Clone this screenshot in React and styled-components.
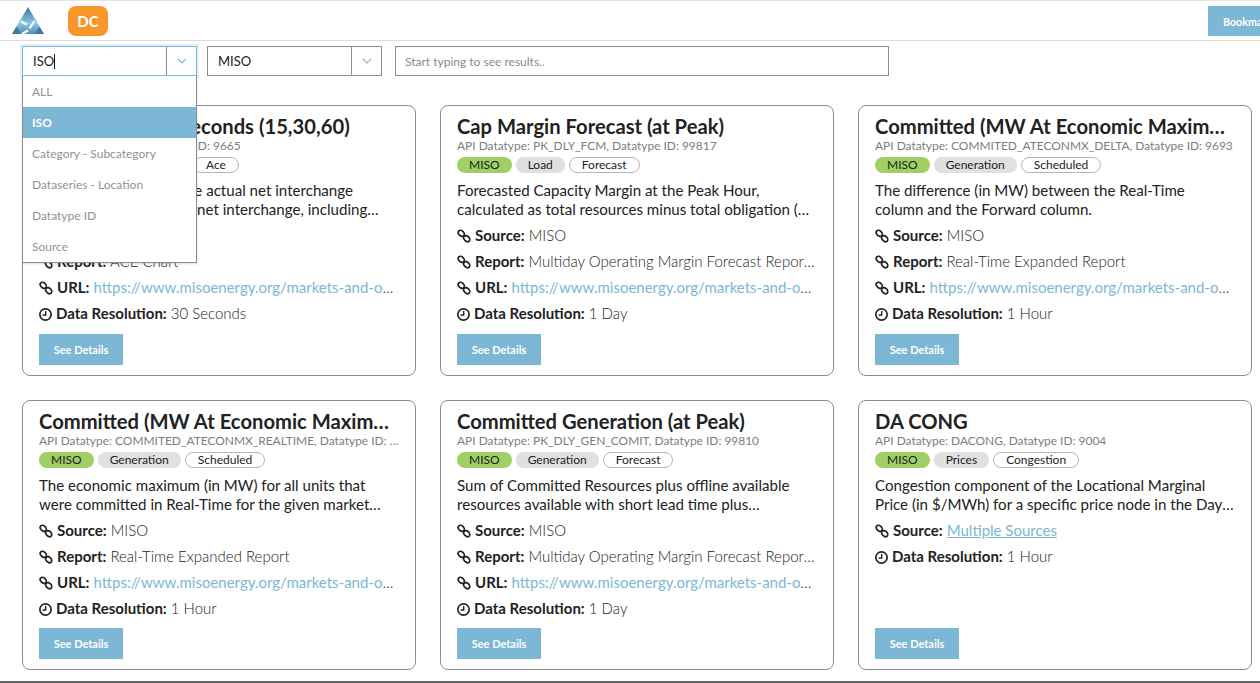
import React from "react";
import styled, { createGlobalStyle } from "styled-components";

const Global = createGlobalStyle`
  html, body { margin: 0; padding: 0; background: #fff; }
  body { font-family: Lato, "Open Sans", sans-serif; color: #222; overflow: hidden; }
  * { box-sizing: border-box; }
`;
const Page = styled.div`
  width: 1260px; height: 683px; position: relative; overflow: hidden;
  border-top: 1px solid #e4e4e4; border-bottom: 2px solid #666;
`;
const Header = styled.header`
  height: 40px; display: flex; align-items: center; padding-left: 12px;
  border-bottom: 1px solid #dcdcdc; position: relative;
`;
const Logo = styled.svg` width: 33px; height: 28px; display: block; `;
const Avatar = styled.div`
  width: 40px; height: 30px; margin-left: 23px; border-radius: 8px; background: #f7962a; color: #fff;
  font-size: 15px; font-weight: 700; display: flex; align-items: center; justify-content: center;
`;
const Bookmark = styled.button`
  margin-left: auto; width: 52px; height: 30px; border: 0; background: #7cb7d6; color: #fff; font: 700 10.7px Lato, sans-serif;
  padding: 0 0 0 15px; text-align: left; white-space: nowrap; overflow: hidden; margin-top: 1px;
`;
const Filters = styled.div`
  display: flex; gap: 10px; padding: 5px 0 0 22px; height: 64px;
`;
const SelectWrap = styled.div`
  position: relative; width: ${p => p.$w}px; height: 30px; display: flex; background: #fff;
  border: 1px solid ${p => p.$focus ? "#7cb7d6" : "#8e8e8e"};
  box-shadow: ${p => p.$focus ? "0 0 0 2px #e4f0f8" : "none"};
`;
const SelectValue = styled.div`
  flex: 1; padding-left: 10px; font-size: 13px; line-height: 28px; color: #222; display: flex; align-items: center;
`;
const Caret = styled.span` width: 1px; height: 15px; background: #111; `;
const Arrow = styled.div`
  width: 30px; border-left: 1px solid #8e8e8e; display: flex; align-items: center; justify-content: center; color: #7cb7d6;
`;
const Search = styled.input`
  width: 494px; height: 30px; margin-left: 3px; border: 1px solid #8e8e8e; padding: 0 9px; font: 12px Lato, sans-serif; outline: none;
  &::placeholder { color: #8a8a8a; opacity: 1; }
`;
const Menu = styled.ul`
  position: absolute; z-index: 5; top: 29px; left: -1px; width: 175px; margin: 0; padding: 0; list-style: none; background: #fff;
  border: 1px solid #8e8e8e; border-top: 0; box-shadow: 0 1px 2px rgba(0,0,0,.15);
`;
const MenuItem = styled.li`
  height: 31px; line-height: 31px; padding-left: 9px; font-size: 12px;
  background: ${p => p.$active ? "#7cb7d6" : "#fff"}; color: ${p => p.$active ? "#fff" : "#929292"}; font-weight: ${p => p.$active ? 700 : 400};
`;
const Grid = styled.main`
  display: grid; grid-template-columns: repeat(3, 394px); grid-template-rows: 271px 270px; column-gap: 24px; row-gap: 24px; padding-left: 22px;
`;
const Card = styled.article`
  border: 1px solid #8c8c8c; border-radius: 8px; padding: 9px 16px 0; display: flex; flex-direction: column; min-width: 0; background: #fff;
`;
const Title = styled.h2`
  margin: 0; font-size: 20.2px; line-height: 23px; font-weight: 700; color: #222; white-space: nowrap; overflow: hidden; text-overflow: ellipsis;
`;
const Sub = styled.div`
  font-size: 11.95px; line-height: 15px; color: #7d7d7d; white-space: nowrap; overflow: hidden; text-overflow: ellipsis;
`;
const Tags = styled.div` display: flex; gap: 4px; margin-top: 4px; `;
const Tag = styled.span`
  height: 16px; border-radius: 8px; font-size: 12px; padding: 0 12px; color: #222; white-space: nowrap;
  background: ${p => p.$k === "iso" ? "#a0cf65" : p.$k === "cat" ? "#e0e0e0" : "#fff"};
  border: ${p => p.$k === "sub" ? "1px solid #b5b5b5" : "0"};
  line-height: ${p => p.$k === "sub" ? "14px" : "16px"};
`;
const Desc = styled.p`
  margin: 8px 0 0; font-size: 15.1px; line-height: 19px; height: 38px; color: #222; overflow: hidden;
  display: -webkit-box; -webkit-line-clamp: 2; -webkit-box-orient: vertical;
`;
const Info = styled.div`
  font-size: 15px; line-height: 20px; margin-top: 6px; font-weight: 300; color: #222; white-space: nowrap; overflow: hidden; text-overflow: ellipsis;
  & b { color: #222; font-weight: 700; }
  & svg { vertical-align: -2px; margin-right: 4px; }
  &:first-of-type { margin-top: 7px; }
`;
const Link = styled.span`
  color: #7cb7d6; font-weight: 400; text-decoration: ${p => p.$u ? "underline" : "none"};
`;
const Details = styled.button`
  margin-top: auto; margin-bottom: 10px; align-self: flex-start; width: 84px; height: 31px; border: 0; background: #7cb7d6; color: #fff;
  font: 700 11px Lato, sans-serif; padding: 0 0 1px;
`;

const Chain = () => (
  <svg width="14" height="14" viewBox="0 0 14 14" fill="none" stroke="#222" strokeWidth="1.7">
    <ellipse cx="4.300" cy="4.300" rx="3.500" ry="2.500" transform="rotate(45 4.300 4.300)" />
    <ellipse cx="9.700" cy="9.700" rx="3.500" ry="2.500" transform="rotate(45 9.700 9.700)" />
    <path d="M6.200 6.200 7.800 7.800" strokeWidth="1.400" />
  </svg>
);
const Clock = () => (
  <svg width="13" height="13" viewBox="0 0 14 14" fill="none" stroke="#222" strokeWidth="1.800">
    <circle cx="7" cy="7" r="6.100" /><path d="M7.200 3.300V7.600H3.900" strokeWidth="1.500" />
  </svg>
);
const Chevron = () => (
  <svg width="10" height="6" viewBox="0 0 10 6" fill="none" stroke="currentColor" strokeWidth="1.2"><path d="M.8.8 5 5l4.200-4.200" /></svg>
);

const URL = "https://www.misoenergy.org/markets-and-operations/real-time--market-data/";
const MOM = "Multiday Operating Margin Forecast Report (MOMF)";
const cards = [
  { title: "ACE Charts, 15 Seconds (15,30,60)", sub: "API Datatype: ACE, Datatype ID: 9665", tags: ["MISO", "Interchanges", "Ace"], desc: "Differences between the actual net interchange compared to scheduled net interchange, including frequency bias", source: "MISO", report: "ACE Chart", url: true, res: "30 Seconds" },
  { title: "Cap Margin Forecast (at Peak)", sub: "API Datatype: PK_DLY_FCM, Datatype ID: 99817", tags: ["MISO", "Load", "Forecast"], desc: "Forecasted Capacity Margin at the Peak Hour, calculated as total resources minus total obligation (m for the day)", source: "MISO", report: MOM, url: true, res: "1 Day" },
  { title: "Committed (MW At Economic Maximum) Delta", sub: "API Datatype: COMMITED_ATECONMX_DELTA, Datatype ID: 9693", tags: ["MISO", "Generation", "Scheduled"], desc: "The difference (in MW) between the Real-Time column and the Forward column.", source: "MISO", report: "Real-Time Expanded Report", url: true, res: "1 Hour" },
  { title: "Committed (MW At Economic Maximum) Realtime", sub: "API Datatype: COMMITED_ATECONMX_REALTIME, Datatype ID: 9692", tags: ["MISO", "Generation", "Scheduled"], desc: "The economic maximum (in MW) for all units that were committed in Real-Time for the given market hour and operating day", source: "MISO", report: "Real-Time Expanded Report", url: true, res: "1 Hour" },
  { title: "Committed Generation (at Peak)", sub: "API Datatype: PK_DLY_GEN_COMIT, Datatype ID: 99810", tags: ["MISO", "Generation", "Forecast"], desc: "Sum of Committed Resources plus offline available resources available with short lead time plus additionally-scheduled resources", source: "MISO", report: MOM, url: true, res: "1 Day" },
  { title: "DA CONG", sub: "API Datatype: DACONG, Datatype ID: 9004", tags: ["MISO", "Prices", "Congestion"], desc: "Congestion component of the Locational Marginal Price (in $/MWh) for a specific price node in the Day-Ahead market for each hour", multi: true, res: "1 Hour" },
];
const kinds = ["iso", "cat", "sub"];
const options = ["ALL", "ISO", "Category - Subcategory", "Dataseries - Location", "Datatype ID", "Source"];

export default function App() {
  return (
    <Page>
      <Global />
      <Header>
        <Logo viewBox="0 0 33 28">
          <defs>
            <linearGradient id="lg" x1="0" y1="0" x2="0" y2="1"><stop offset="0" stopColor="#37789f" /><stop offset="0.6" stopColor="#8cc6e2" /><stop offset="1" stopColor="#4f92b8" /></linearGradient>
          </defs>
          <path d="M16 0 32 27H0Z" fill="url(#lg)" />
          <path d="M0 27l4.500-7.500 5 7.500Z M22.500 27l4.800-7.500 4.700 7.500Z" fill="#3c7ea6" />
          <path d="M9 14.500 15 17.500M22.500 14 17.500 21.500M10 27 16 23.500" fill="none" stroke="#fff" strokeWidth="2.200" />
        </Logo>
        <Avatar>DC</Avatar>
        <Bookmark>Bookmark</Bookmark>
      </Header>
      <Filters>
        <SelectWrap $w={175} $focus>
          <SelectValue>ISO<Caret /></SelectValue>
          <Arrow><Chevron /></Arrow>
          <Menu>
            {options.map(o => <MenuItem key={o} $active={o === "ISO"}>{o}</MenuItem>)}
          </Menu>
        </SelectWrap>
        <SelectWrap $w={175}>
          <SelectValue>MISO</SelectValue>
          <Arrow><Chevron /></Arrow>
        </SelectWrap>
        <Search placeholder="Start typing to see results.." readOnly />
      </Filters>
      <Grid>
        {cards.map(c => (
          <Card key={c.title}>
            <Title>{c.title}</Title>
            <Sub>{c.sub}</Sub>
            <Tags>{c.tags.map((t, i) => <Tag key={t} $k={kinds[i]}>{t}</Tag>)}</Tags>
            <Desc>{c.desc}</Desc>
            <Info><Chain /><b>Source:</b> {c.multi ? <Link $u>Multiple Sources</Link> : c.source}</Info>
            {c.report && <Info><Chain /><b>Report:</b> {c.report}</Info>}
            {c.url && <Info><Chain /><b>URL:</b> <Link>{URL}</Link></Info>}
            <Info><Clock /><b>Data Resolution:</b> {c.res}</Info>
            <Details>See Details</Details>
          </Card>
        ))}
      </Grid>
    </Page>
  );
}
